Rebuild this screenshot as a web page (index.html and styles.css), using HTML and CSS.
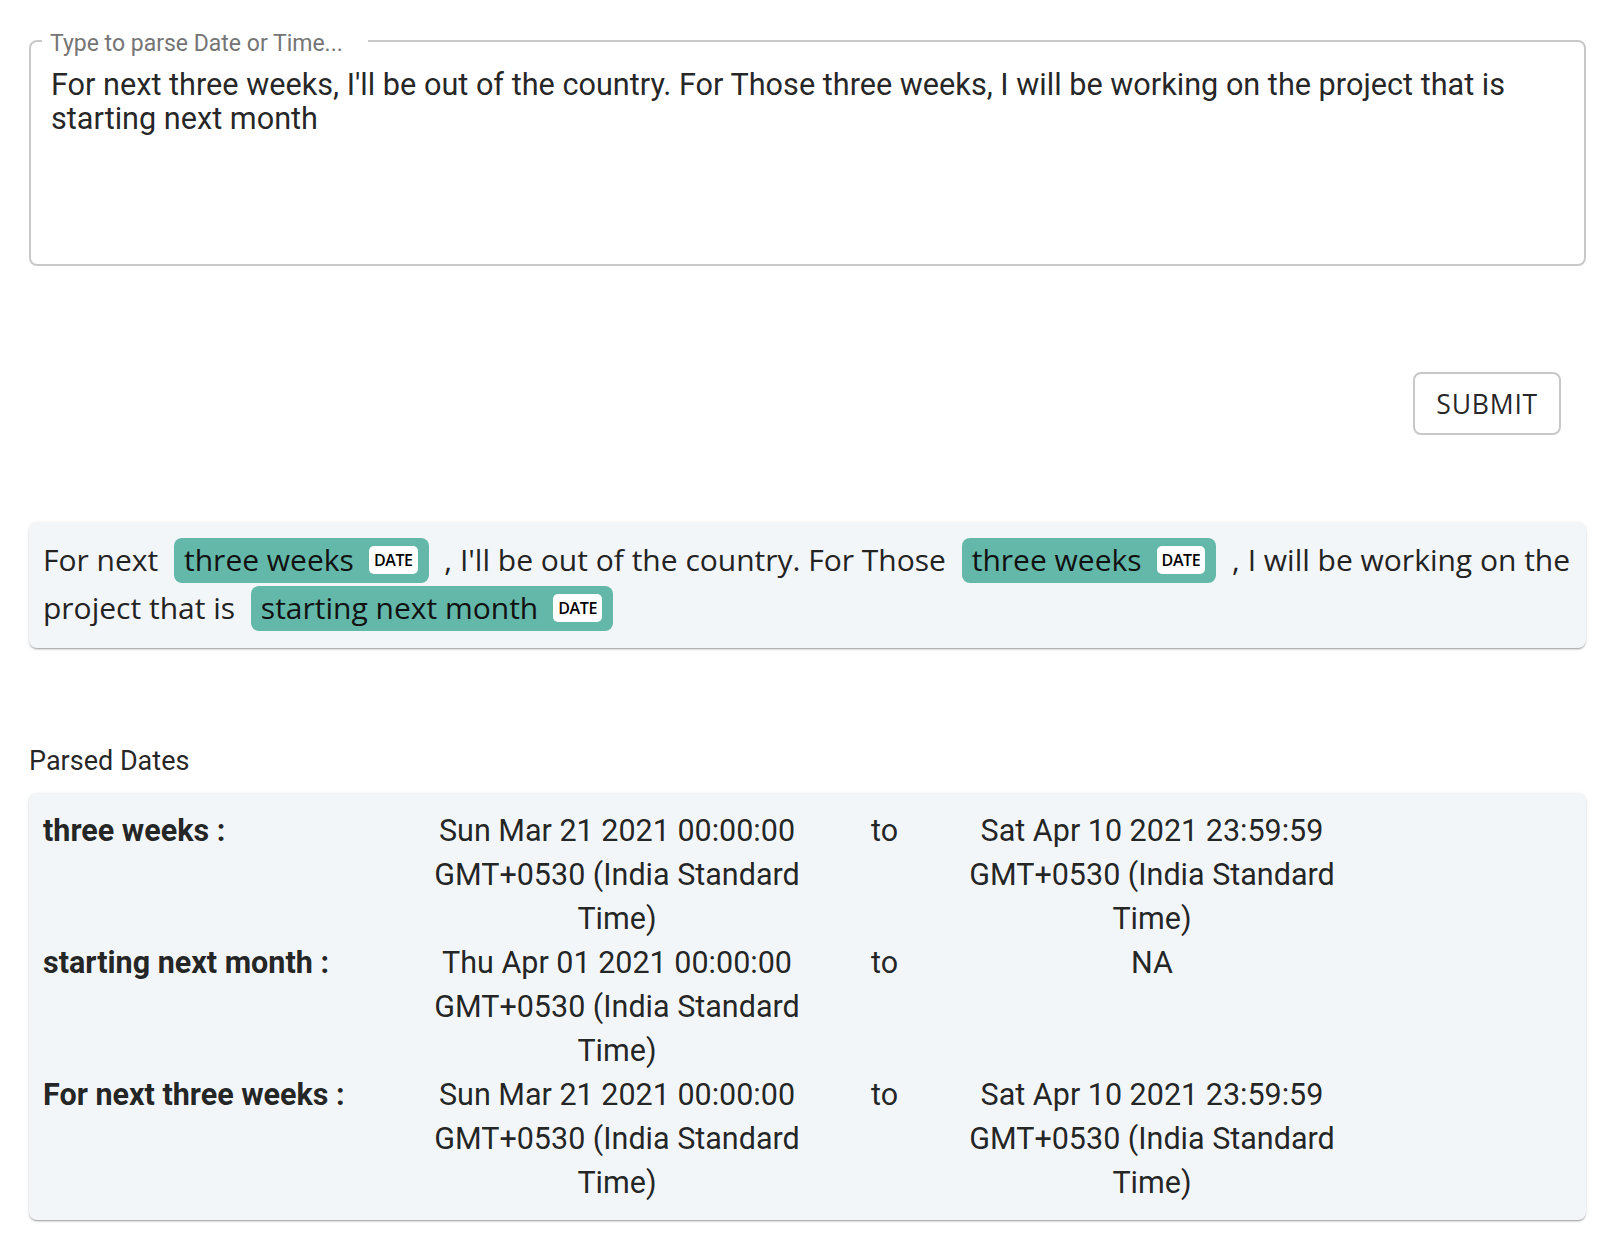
FILE: index.html
```html
<!DOCTYPE html>
<html lang="en">
<head>
    <meta charset="UTF-8">
    <meta name="viewport" content="width=device-width, initial-scale=1.0">
    <title>Date Parser</title>
    <link rel="stylesheet" href="styles.css">
</head>
<body>
    <div class="page">
        <fieldset class="input-box">
            <legend>Type to parse Date or Time...</legend>
            <textarea class="input-text" spellcheck="false">For next three weeks, I'll be out of the country. For Those three weeks, I will be working on the project that is starting next month</textarea>
        </fieldset>

        <div class="actions">
            <button class="submit-btn" type="button">Submit</button>
        </div>

        <div class="paper highlight">
            For next <mark class="entity">three weeks<span class="tag">DATE</span></mark> , I'll be out of the country. For Those <mark class="entity">three weeks<span class="tag">DATE</span></mark> , I will be working on the project that is <mark class="entity">starting next month<span class="tag">DATE</span></mark>
        </div>

        <h2 class="section-title">Parsed Dates</h2>

        <div class="paper dates">
            <div class="date-row">
                <div class="date-label">three weeks :</div>
                <div class="date-val">Sun Mar 21 2021 00:00:00 GMT+0530 (India Standard Time)</div>
                <div class="date-to">to</div>
                <div class="date-val">Sat Apr 10 2021 23:59:59 GMT+0530 (India Standard Time)</div>
            </div>
            <div class="date-row">
                <div class="date-label">starting next month :</div>
                <div class="date-val">Thu Apr 01 2021 00:00:00 GMT+0530 (India Standard Time)</div>
                <div class="date-to">to</div>
                <div class="date-val">NA</div>
            </div>
            <div class="date-row">
                <div class="date-label">For next three weeks :</div>
                <div class="date-val">Sun Mar 21 2021 00:00:00 GMT+0530 (India Standard Time)</div>
                <div class="date-to">to</div>
                <div class="date-val">Sat Apr 10 2021 23:59:59 GMT+0530 (India Standard Time)</div>
            </div>
        </div>
    </div>
</body>
</html>
```

FILE: styles.css
```css
body {
    margin: 0;
    background: #fff;
    font-family: "Open Sans", "Noto Sans", sans-serif;
    color: rgba(0, 0, 0, 0.87);
}

.page {
    padding: 26px 32px 20px 29px;
}

/* outlined text field */
.input-box {
    margin: 0;
    padding: 0;
    min-width: 0;
    border: 2px solid #c8c8c8;
    border-radius: 8px;
}
.input-box legend {
    margin-left: 11px;
    padding: 6px 25px 0 8px;
    font: 400 23px/23px Roboto, sans-serif;
    color: #757575;
}
.input-text {
    display: block;
    width: 100%;
    height: 209px;
    box-sizing: border-box;
    margin: 0;
    padding: 13px 20px 0 20px;
    border: 0;
    outline: none;
    resize: none;
    background: transparent;
    font: 400 30.65px/34px Roboto, sans-serif;
    color: rgba(0, 0, 0, 0.87);
}

.actions {
    display: flex;
    justify-content: flex-end;
    margin-top: 106px;
    padding-right: 25px;
}
.submit-btn {
    padding: 13px 21px 11px;
    border: 2px solid #c8c8c8;
    border-radius: 8px;
    background: #fff;
    color: rgba(0, 0, 0, 0.87);
    font: 500 26.6px/35px "Open Sans", sans-serif;
    letter-spacing: 0.76px;
    text-transform: uppercase;
    cursor: pointer;
}

.paper {
    background: #f3f6f9;
    border-radius: 8px;
    box-shadow: 0 2px 2px -1px rgba(0, 0, 0, 0.28),
                0 1px 2px 0 rgba(0, 0, 0, 0.12),
                0 1px 5px 0 rgba(0, 0, 0, 0.06);
}

/* annotated text */
.highlight {
    margin-top: 87px;
    padding: 14px 8px 16px 14px;
    font: 400 30px/48px "Open Sans", sans-serif;
    color: #232323;
}
.entity {
    display: inline-flex;
    align-items: center;
    height: 45px;
    box-sizing: border-box;
    margin: 0 8px;
    padding: 0 11px 0 10px;
    background: #63b8a9;
    border-radius: 8px;
    color: #111;
    line-height: 1;
}
.tag {
    margin-left: 15px;
    padding: 0 5px;
    background: #fff;
    border-radius: 5px;
    color: #000;
    font: 600 16px/28px "Open Sans", sans-serif;
    letter-spacing: -0.4px;
}

.section-title {
    margin: 94px 0 0;
    font: 400 27px/38px Roboto, sans-serif;
    color: rgba(0, 0, 0, 0.87);
}

/* parsed dates list */
.dates {
    margin-top: 13px;
    padding: 16px 14px 15px;
    font: 400 30.5px/44px Roboto, sans-serif;
}
.date-row {
    display: grid;
    grid-template-columns: 374px 400px 135px 400px;
}
.date-label {
    font-weight: 700;
}
.date-val,
.date-to {
    text-align: center;
}
```
